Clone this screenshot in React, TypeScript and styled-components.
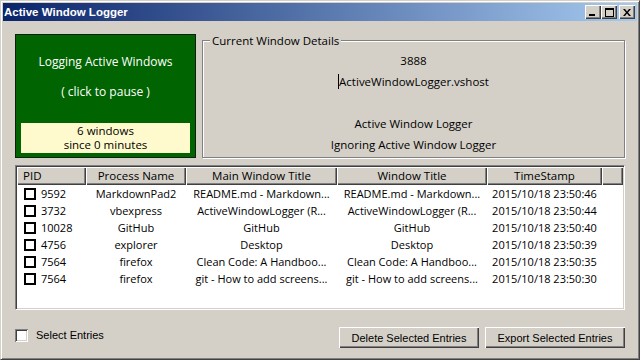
import styled, { createGlobalStyle } from "styled-components";

const GlobalStyle = createGlobalStyle`
  html, body {
    margin: 0;
    padding: 0;
    background: #d4d0c8;
  }
  body {
    width: 640px;
    height: 360px;
    overflow: hidden;
  }
`;

const uiFont = `"Open Sans", "Noto Sans", sans-serif`;
const sysFont = `"Liberation Sans", Arial, sans-serif`;
const columns = "69px 100px 151px 150px 115px 1fr";

const Window = styled.div`
  box-sizing: border-box;
  width: 640px;
  height: 360px;
  display: flex;
  flex-direction: column;
  background: #d4d0c8;
  border: 1px solid;
  border-color: #d4d0c8 #404040 #404040 #d4d0c8;
  box-shadow: inset 1px 1px 0 #fff, inset -1px -1px 0 #808080;
  padding: 2px;
`;

const TitleBar = styled.div`
  height: 18px;
  flex: none;
  display: flex;
  align-items: center;
  padding: 0 2px 0 1px;
  background: linear-gradient(to right, #0a246a, #a6caf0);
`;

const Title = styled.div`
  flex: 1;
  font: bold 11.5px ${sysFont};
  color: #fff;
`;

const TitleButtons = styled.div`
  display: flex;
  align-items: center;
`;

const TitleButton = styled.div<{ $gap?: boolean }>`
  width: 16px;
  height: 14px;
  margin-left: ${(p) => (p.$gap ? "2px" : "0")};
  display: flex;
  align-items: center;
  justify-content: center;
  background: #d4d0c8;
  box-shadow: inset 1px 1px 0 #fff, inset -1px -1px 0 #404040,
    inset -2px -2px 0 #808080;
`;

const Client = styled.div`
  flex: 1;
  display: flex;
  flex-direction: column;
  padding: 13px 12px 0 12px;
`;

const TopRow = styled.div`
  display: flex;
  gap: 6px;
  height: 124px;
`;

const LoggingPanel = styled.div`
  box-sizing: border-box;
  width: 181px;
  display: flex;
  flex-direction: column;
  align-items: center;
  background: #006400;
  border: 1px solid #102010;
  color: #fff;
  font: 12px ${uiFont};
  cursor: pointer;
`;

const PanelLine = styled.div<{ $top: number }>`
  margin-top: ${(p) => p.$top}px;
  line-height: 16px;
`;

const Counter = styled.div`
  box-sizing: border-box;
  align-self: stretch;
  margin: auto 5px 4px 5px;
  height: 30px;
  padding-top: 1px;
  background: #fffacd;
  color: #000;
  text-align: center;
  font-size: 11.5px;
  line-height: 14px;
`;

const GroupBox = styled.fieldset`
  flex: 1;
  min-width: 0;
  margin: 0;
  padding: 3px 0 0 0;
  border: 1px solid #808080;
  box-shadow: inset 1px 1px 0 #fff, 1px 1px 0 #fff;
  display: flex;
  flex-direction: column;
  align-items: center;
  font: 11.5px ${uiFont};
  color: #000;
`;

const Legend = styled.legend`
  margin-left: 7px;
  padding: 0 2px;
  line-height: 13px;
  background: #d4d0c8;
`;

const DetailLine = styled.div`
  height: 21px;
  line-height: 21px;
  white-space: nowrap;
`;

const Caret = styled.span`
  border-left: 1px solid #000;
`;

const ListView = styled.div`
  box-sizing: border-box;
  margin-top: 7px;
  height: 145px;
  padding: 1px;
  border: 1px solid;
  border-color: #808080 #fff #fff #808080;
  box-shadow: inset 1px 1px 0 #404040, inset -1px -1px 0 #d4d0c8;
  background: #fff;
  font: 11px ${uiFont};
  color: #000;
`;

const HeaderRow = styled.div`
  display: grid;
  grid-template-columns: ${columns};
  height: 18px;
  font-size: 11.5px;
`;

const HeaderCell = styled.div<{ $left?: boolean }>`
  background: #d4d0c8;
  box-shadow: inset 1px 1px 0 #fff, inset -1px -1px 0 #404040,
    inset -2px -2px 0 #808080;
  line-height: 17px;
  text-align: ${(p) => (p.$left ? "left" : "center")};
  padding-left: ${(p) => (p.$left ? "6px" : "0")};
  white-space: nowrap;
  overflow: hidden;
`;

const Row = styled.div`
  display: grid;
  grid-template-columns: ${columns};
  height: 17px;
  line-height: 17px;
`;

const Cell = styled.div`
  text-align: center;
  white-space: nowrap;
  overflow: hidden;
  text-overflow: ellipsis;
  padding: 0 1px;
`;

const PidCell = styled.div`
  display: flex;
  align-items: center;
  gap: 5px;
  padding-left: 7px;
`;

const RowCheck = styled.span`
  box-sizing: border-box;
  width: 12px;
  height: 12px;
  border: 2px solid #000;
  background: #fff;
`;

const Footer = styled.div`
  display: flex;
  align-items: flex-start;
  margin-top: 17px;
  height: 21px;
  font: 11px ${sysFont};
  color: #000;
`;

const SelectAll = styled.label`
  display: flex;
  align-items: center;
  gap: 8px;
  margin-top: 2px;
  line-height: 13px;
`;

const ClassicCheck = styled.span`
  width: 13px;
  height: 13px;
  background: #fff;
  box-shadow: inset 1px 1px 0 #808080, inset -1px -1px 0 #fff,
    inset 2px 2px 0 #404040, inset -2px -2px 0 #d4d0c8;
`;

const Buttons = styled.div`
  margin-left: auto;
  display: flex;
  gap: 6px;
`;

const Button = styled.button`
  width: 140px;
  height: 21px;
  padding: 0;
  border: none;
  background: #d4d0c8;
  box-shadow: inset 1px 1px 0 #fff, inset -1px -1px 0 #404040,
    inset -2px -2px 0 #808080;
  font: 11px ${sysFont};
  color: #000;
`;

const entries = [
  { pid: "9592", name: "MarkdownPad2", main: "README.md - Markdown...", title: "README.md - Markdown...", time: "2015/10/18 23:50:46" },
  { pid: "3732", name: "vbexpress", main: "ActiveWindowLogger (R...", title: "ActiveWindowLogger (R...", time: "2015/10/18 23:50:44" },
  { pid: "10028", name: "GitHub", main: "GitHub", title: "GitHub", time: "2015/10/18 23:50:40" },
  { pid: "4756", name: "explorer", main: "Desktop", title: "Desktop", time: "2015/10/18 23:50:39" },
  { pid: "7564", name: "firefox", main: "Clean Code: A Handboo...", title: "Clean Code: A Handboo...", time: "2015/10/18 23:50:35" },
  { pid: "7564", name: "firefox", main: "git - How to add screens...", title: "git - How to add screens...", time: "2015/10/18 23:50:30" },
];

function App() {
  return (
    <>
      <GlobalStyle />
      <Window>
        <TitleBar>
          <Title>Active Window Logger</Title>
          <TitleButtons>
            <TitleButton>
              <svg width="8" height="8" viewBox="0 0 8 8">
                <rect x="0" y="6" width="6" height="2" fill="#000" />
              </svg>
            </TitleButton>
            <TitleButton>
              <svg width="9" height="9" viewBox="0 0 9 9">
                <rect x="0.5" y="0.5" width="8" height="8" fill="none" stroke="#000" />
                <rect x="0" y="0" width="9" height="2" fill="#000" />
              </svg>
            </TitleButton>
            <TitleButton $gap>
              <svg width="8" height="7" viewBox="0 0 8 7">
                <path d="M0 0h2l2 2.5L6 0h2L5 3.5 8 7H6L4 4.5 2 7H0l3-3.5z" fill="#000" />
              </svg>
            </TitleButton>
          </TitleButtons>
        </TitleBar>
        <Client>
          <TopRow>
            <LoggingPanel>
              <PanelLine $top={19}>Logging Active Windows</PanelLine>
              <PanelLine $top={14}>( click to pause )</PanelLine>
              <Counter>
                6 windows
                <br />
                since 0 minutes
              </Counter>
            </LoggingPanel>
            <GroupBox>
              <Legend>Current Window Details</Legend>
              <DetailLine>3888</DetailLine>
              <DetailLine>
                <Caret />
                ActiveWindowLogger.vshost
              </DetailLine>
              <DetailLine />
              <DetailLine>Active Window Logger</DetailLine>
              <DetailLine>Ignoring Active Window Logger</DetailLine>
            </GroupBox>
          </TopRow>
          <ListView>
            <HeaderRow>
              <HeaderCell $left>PID</HeaderCell>
              <HeaderCell>Process Name</HeaderCell>
              <HeaderCell>Main Window Title</HeaderCell>
              <HeaderCell>Window Title</HeaderCell>
              <HeaderCell>TimeStamp</HeaderCell>
              <HeaderCell />
            </HeaderRow>
            {entries.map((e, i) => (
              <Row key={i}>
                <PidCell>
                  <RowCheck />
                  {e.pid}
                </PidCell>
                <Cell>{e.name}</Cell>
                <Cell>{e.main}</Cell>
                <Cell>{e.title}</Cell>
                <Cell>{e.time}</Cell>
                <div />
              </Row>
            ))}
          </ListView>
          <Footer>
            <SelectAll>
              <ClassicCheck />
              Select Entries
            </SelectAll>
            <Buttons>
              <Button>Delete Selected Entries</Button>
              <Button>Export Selected Entries</Button>
            </Buttons>
          </Footer>
        </Client>
      </Window>
    </>
  );
}

export default App;
